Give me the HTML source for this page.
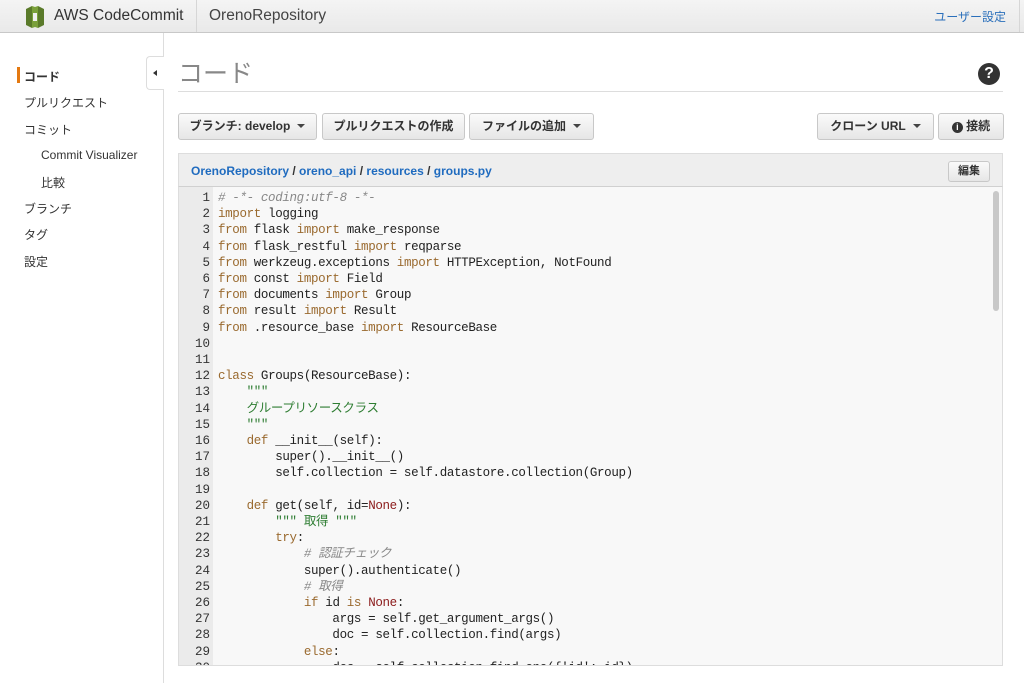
<!DOCTYPE html>
<html><head><meta charset="utf-8"><style>
*{box-sizing:border-box;margin:0;padding:0}
body{width:1024px;height:683px;overflow:hidden;background:#fff;font-family:"Liberation Sans","Noto Sans CJK JP",sans-serif;position:relative;color:#333}
.hdr{position:absolute;left:0;top:0;width:1024px;height:33px;background:linear-gradient(#f4f4f4,#e9e9e9);border-bottom:1px solid #c8c8c8}
.hdr .logo{position:absolute;left:24px;top:5px}
.hdr .t1{position:absolute;left:54px;top:7px;font-size:15.5px;color:#333}
.hdr .sep{position:absolute;left:196px;top:0;height:32px;border-left:1px solid #d6d6d6}
.hdr .t2{position:absolute;left:209px;top:7px;font-size:15.5px;color:#444}
.hdr .sep2{position:absolute;left:1019px;top:0;height:32px;border-left:1px solid #d6d6d6}
.hdr .us{position:absolute;right:18px;top:8px;font-size:12px;color:#2a6fbb}
.side{position:absolute;left:0;top:33px;width:164px;height:650px;border-right:1px solid #ddd}
.side div{position:absolute;font-size:12px;color:#333}
.tab{position:absolute;left:146px;top:56px;width:18px;height:34px;background:#fff;border:1px solid #ddd;border-right:none;border-radius:4px 0 0 4px}
.tab:after{content:"";position:absolute;left:6px;top:13px;border-right:4px solid #333;border-top:3.5px solid transparent;border-bottom:3.5px solid transparent}
h1{position:absolute;left:178px;top:54px;font-size:25px;font-weight:normal;color:#888}
.hl{position:absolute;left:178px;top:91px;width:825px;border-top:1px solid #ddd}
.help{position:absolute;left:978px;top:63px;width:22px;height:22px;border-radius:50%;background:#333;color:#fff;font-weight:bold;font-size:16px;text-align:center;line-height:22px}
.btn{position:absolute;top:113px;height:27px;border:1px solid #c8c8c8;border-radius:3px;background:linear-gradient(#fafafa,#e6e6e6);font-size:12px;font-weight:bold;color:#333;line-height:25px;text-align:center}
.car{display:inline-block;margin-left:7px;border-top:4px solid #444;border-left:4px solid transparent;border-right:4px solid transparent;vertical-align:2px}
.ph{position:absolute;left:178px;top:153px;width:825px;height:34px;background:#eeeeee;border:1px solid #ddd;border-bottom:1px solid #d0d0d0}
.ph .bc{position:absolute;left:12px;top:10px;font-size:12px;font-weight:bold;color:#333}
.ph .bc a{color:#1f6bbf;text-decoration:none}
.ph .ed{position:absolute;right:12px;top:7px;width:42px;height:21px;border:1px solid #c8c8c8;border-radius:3px;background:linear-gradient(#fafafa,#e6e6e6);font-size:11px;font-weight:bold;text-align:center;line-height:19px}
.code{position:absolute;left:178px;top:187px;width:825px;height:479px;background:#f8f8f8;border:1px solid #ddd;border-top:none;overflow:hidden}
.gut{position:absolute;left:0;top:0;width:34px;height:479px;background:#ebebeb}
pre{position:absolute;left:0;top:3px;font-family:"Liberation Mono","Noto Sans CJK JP",monospace;font-size:12.5px;letter-spacing:-0.35px;line-height:16.2px;color:#222}
.n{display:inline-block;width:31px;text-align:right;color:#333;margin-right:8px;letter-spacing:0}
.k{color:#9a6a2f}.c{color:#888;font-style:italic}.s{color:#2e7d32}.nn{color:#8b1a1a}
.sb{position:absolute;right:3px;top:4px;width:6px;height:120px;background:#c8c8c8;border-radius:3px}
</style></head><body>
<div class="hdr">
<svg class="logo" width="22" height="24" viewBox="0 0 22 24"><path d="M2 4 L8 1 L8 23 L2 20Z" fill="#5a7a2a"/><path d="M20 4 L14 1 L14 23 L20 20Z" fill="#5a7a2a"/><path d="M8 1 L11 2 L11 22 L8 23Z" fill="#7aa03a"/><path d="M14 1 L11 2 L11 22 L14 23Z" fill="#7aa03a"/><rect x="9" y="8" width="4" height="8" fill="#f0f0f0"/></svg>
<div class="t1">AWS CodeCommit</div><div class="sep"></div><div class="t2">OrenoRepository</div><div class="sep2"></div>
<div class="us">ユーザー設定</div></div>
<div class="side">
<div style="left:17px;top:34px;height:16px;border-left:3px solid #e47911"></div>
<div style="left:24px;top:35px;font-weight:bold">コード</div>
<div style="left:24px;top:61px">プルリクエスト</div>
<div style="left:24px;top:88px">コミット</div>
<div style="left:41px;top:115px">Commit Visualizer</div>
<div style="left:41px;top:141px">比較</div>
<div style="left:24px;top:167px">ブランチ</div>
<div style="left:24px;top:193px">タグ</div>
<div style="left:24px;top:220px">設定</div>
</div>
<div class="tab"></div>
<h1>コード</h1><div class="hl"></div><div class="help">?</div>
<div class="btn" style="left:178px;width:139px">ブランチ: develop<span class="car"></span></div>
<div class="btn" style="left:322px;width:143px">プルリクエストの作成</div>
<div class="btn" style="left:469px;width:125px">ファイルの追加<span class="car"></span></div>
<div class="btn" style="left:817px;width:117px">クローン URL<span class="car"></span></div>
<div class="btn" style="left:938px;width:66px"><span style="display:inline-block;width:11px;height:11px;border-radius:50%;background:#333;color:#fff;font-size:9px;line-height:11px;vertical-align:0">i</span> 接続</div>
<div class="ph"><div class="bc"><a>OrenoRepository</a> / <a>oreno_api</a> / <a>resources</a> / <a>groups.py</a></div><div class="ed">編集</div></div>
<div class="code"><div class="gut"></div><div class="sb"></div>
<pre><span class="n">1</span><span class="c"># -*- coding:utf-8 -*-</span>
<span class="n">2</span><span class="k">import</span> logging
<span class="n">3</span><span class="k">from</span> flask <span class="k">import</span> make_response
<span class="n">4</span><span class="k">from</span> flask_restful <span class="k">import</span> reqparse
<span class="n">5</span><span class="k">from</span> werkzeug.exceptions <span class="k">import</span> HTTPException, NotFound
<span class="n">6</span><span class="k">from</span> const <span class="k">import</span> Field
<span class="n">7</span><span class="k">from</span> documents <span class="k">import</span> Group
<span class="n">8</span><span class="k">from</span> result <span class="k">import</span> Result
<span class="n">9</span><span class="k">from</span> .resource_base <span class="k">import</span> ResourceBase
<span class="n">10</span>
<span class="n">11</span>
<span class="n">12</span><span class="k">class</span> Groups(ResourceBase):
<span class="n">13</span>    <span class="s">"""</span>
<span class="n">14</span>    <span class="s">グループリソースクラス</span>
<span class="n">15</span>    <span class="s">"""</span>
<span class="n">16</span>    <span class="k">def</span> __init__(self):
<span class="n">17</span>        super().__init__()
<span class="n">18</span>        self.collection = self.datastore.collection(Group)
<span class="n">19</span>
<span class="n">20</span>    <span class="k">def</span> get(self, id=<span class="nn">None</span>):
<span class="n">21</span>        <span class="s">""" 取得 """</span>
<span class="n">22</span>        <span class="k">try</span>:
<span class="n">23</span>            <span class="c"># 認証チェック</span>
<span class="n">24</span>            super().authenticate()
<span class="n">25</span>            <span class="c"># 取得</span>
<span class="n">26</span>            <span class="k">if</span> id <span class="k">is</span> <span class="nn">None</span>:
<span class="n">27</span>                args = self.get_argument_args()
<span class="n">28</span>                doc = self.collection.find(args)
<span class="n">29</span>            <span class="k">else</span>:
<span class="n">30</span>                doc = self.collection.find_one({'id': id})
</pre></div>
</body></html>
